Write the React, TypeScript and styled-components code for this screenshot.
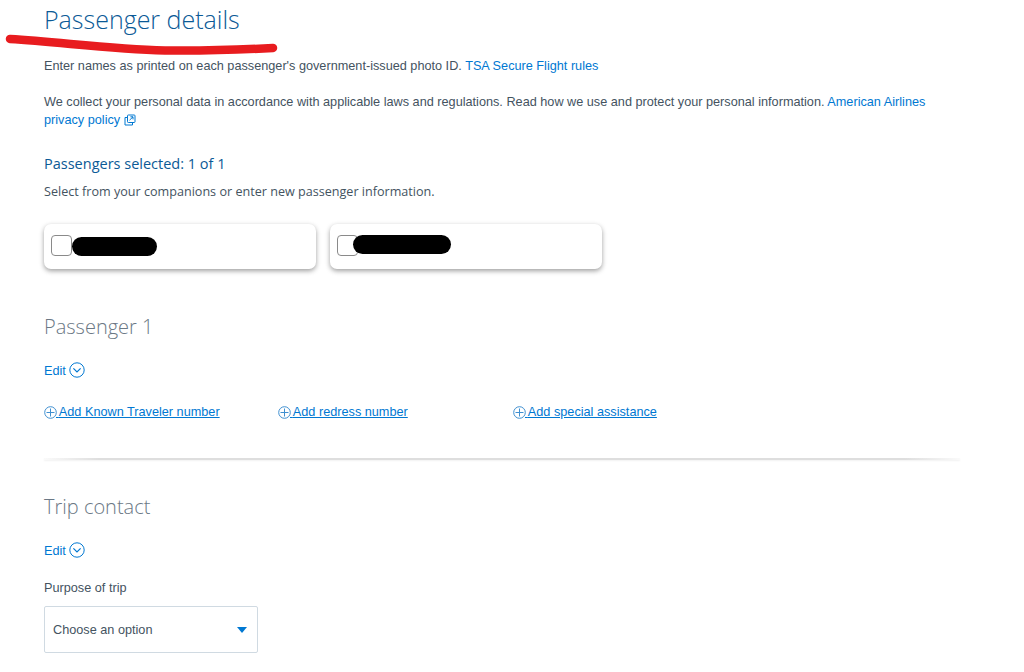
import * as React from 'react';
import styled, { createGlobalStyle } from 'styled-components';

const passengers = [
  { blotWidth: 85, blotHeight: 19, blotLeft: 28, blotTop: 13 },
  { blotWidth: 98, blotHeight: 19, blotLeft: 23, blotTop: 11 },
];

const extras = [
  { label: 'Add Known Traveler number', width: 234 },
  { label: 'Add redress number', width: 235 },
  { label: 'Add special assistance', width: 160 },
];

const CircleChevron = () => (
  <EditIcon viewBox="0 0 16 16" fill="none" stroke="#0078d2" strokeWidth="1">
    <circle cx="8" cy="8" r="7.2" />
    <path d="M4.4 6.4 8 10l3.6-3.6" strokeWidth="1.2" />
  </EditIcon>
);

const CirclePlus = () => (
  <PlusIcon viewBox="0 0 13 13" fill="none" stroke="#3f8fd0" strokeWidth="1">
    <circle cx="6.500" cy="6.500" r="5.800" />
    <path d="M6.500 2.500v8M2.500 6.500h8" />
  </PlusIcon>
);

const ExternalIcon = () => (
  <External viewBox="0 0 12 12" fill="none" stroke="#0078d2" strokeWidth="1">
    <rect x="3.500" y="1" width="7.500" height="7.500" rx="0.800" />
    <path d="M3 3.500H1v7.500h7.500V9" />
    <path d="M5.500 6.200 9 2.800M6.400 2.800H9v2.600" />
  </External>
);

export default () => {
  return (
    <>
      <GlobalStyle />
      <Page>
        <TitleBlock>
          <Title>Passenger details</Title>
          <Scribble viewBox="0 0 280 26" fill="none">
            <path
              d="M10 10C60 13 110 20 165 21.500C205 22 245 20.500 273 19"
              stroke="#e81c1f"
              strokeWidth="8.500"
              strokeLinecap="round"
            />
          </Scribble>
        </TitleBlock>

        <Intro>
          Enter names as printed on each passenger's government-issued photo ID.{' '}
          <Link>TSA Secure Flight rules</Link>
        </Intro>
        <Privacy>
          We collect your personal data in accordance with applicable laws and regulations. Read how
          we use and protect your personal information. <Link>American Airlines privacy policy</Link>{' '}
          <ExternalIcon />
        </Privacy>

        <SelectedTitle>Passengers selected: 1 of 1</SelectedTitle>
        <SelectedHint>Select from your companions or enter new passenger information.</SelectedHint>

        <CardRow>
          {passengers.map((p, i) => (
            <Card key={i}>
              <Check />
              <Blot
                style={{ width: p.blotWidth, height: p.blotHeight, left: p.blotLeft, top: p.blotTop }}
              />
            </Card>
          ))}
        </CardRow>

        <SectionTitle $top={44}>Passenger 1</SectionTitle>
        <EditRow>
          <EditLabel>Edit</EditLabel>
          <CircleChevron />
        </EditRow>

        <ExtrasRow>
          {extras.map((e) => (
            <Extra key={e.label} style={{ width: e.width }}>
              <CirclePlus />
              <ExtraLabel> {e.label}</ExtraLabel>
            </Extra>
          ))}
        </ExtrasRow>

        <Divider />

        <SectionTitle $top={33}>Trip contact</SectionTitle>
        <EditRow>
          <EditLabel>Edit</EditLabel>
          <CircleChevron />
        </EditRow>

        <FieldLabel>Purpose of trip</FieldLabel>
        <Select>
          <span>Choose an option</span>
          <Caret />
        </Select>
      </Page>
    </>
  );
};

const GlobalStyle = createGlobalStyle`
  html, body {
    margin: 0;
    background: #fff;
  }
  body {
    font-family: "Liberation Sans", Arial, sans-serif;
    font-size: 12.700px;
    color: #44535f;
    overflow: hidden;
  }
`;
const Page = styled.div`
  width: 1024px;
  height: 672px;
  padding-left: 44px;
  box-sizing: border-box;
  overflow: hidden;
`;
const TitleBlock = styled.div`
  position: relative;
  height: 57px;
`;
const Title = styled.h1`
  margin: 0;
  padding-top: 2px;
  font-family: "Open Sans", sans-serif;
  font-size: 25px;
  line-height: 34px;
  font-weight: 300;
  color: #0b5a96;
`;
const Scribble = styled.svg`
  position: absolute;
  left: -44px;
  top: 29px;
  width: 280px;
  height: 26px;
`;
const Intro = styled.p`
  margin: 0;
  line-height: 18px;
`;
const Privacy = styled.p`
  margin: 18px 0 0;
  width: 900px;
  line-height: 18px;
`;
const Link = styled.a`
  color: #0078d2;
`;
const External = styled.svg`
  width: 12px;
  height: 12px;
  vertical-align: -2px;
`;
const SelectedTitle = styled.h2`
  margin: 25px 0 0;
  font-family: "Open Sans", sans-serif;
  font-size: 14.500px;
  line-height: 20px;
  font-weight: 400;
  color: #0b5a96;
`;
const SelectedHint = styled.p`
  margin: 9px 0 0;
  font-family: "Open Sans", sans-serif;
  font-size: 12.600px;
  line-height: 18px;
`;
const CardRow = styled.div`
  display: flex;
  gap: 14px;
  margin-top: 23px;
`;
const Card = styled.div`
  position: relative;
  width: 272px;
  height: 45px;
  background: #fff;
  border-radius: 7px;
  box-shadow: 0 2px 5px rgba(0, 0, 0, 0.38);
`;
const Check = styled.div`
  position: absolute;
  left: 7px;
  top: 11px;
  width: 21px;
  height: 21px;
  box-sizing: border-box;
  background: #fff;
  border: 1px solid #8a8a8a;
  border-radius: 4px;
`;
const Blot = styled.div`
  position: absolute;
  background: #000;
  border-radius: 10px;
`;
const SectionTitle = styled.h2<{ $top: number }>`
  margin: ${(p) => p.$top}px 0 0;
  font-family: "Open Sans", sans-serif;
  font-size: 20px;
  line-height: 28px;
  font-weight: 300;
  color: #6b7885;
`;
const EditRow = styled.div`
  display: flex;
  align-items: center;
  gap: 3px;
  margin-top: 20px;
  height: 18px;
`;
const EditLabel = styled.span`
  color: #0078d2;
  position: relative;
  top: 1px;
`;
const EditIcon = styled.svg`
  width: 16px;
  height: 16px;
`;
const ExtrasRow = styled.div`
  display: flex;
  margin-top: 24px;
`;
const Extra = styled.div`
  display: flex;
  align-items: center;
  height: 18px;
`;
const PlusIcon = styled.svg`
  width: 13px;
  height: 13px;
  flex: none;
  margin-right: -1px;
`;
const ExtraLabel = styled.span`
  color: #0078d2;
  text-decoration: underline;
  white-space: pre;
`;
const Divider = styled.div`
  width: 916px;
  height: 2px;
  margin-top: 37px;
  background: linear-gradient(90deg, #fafafa, #dedede 6%, #dedede 94%, #fafafa);
  box-shadow: 0 1px 2px rgba(0, 0, 0, 0.06);
`;
const FieldLabel = styled.div`
  margin-top: 20px;
  line-height: 18px;
`;
const Select = styled.div`
  display: flex;
  align-items: center;
  justify-content: space-between;
  box-sizing: border-box;
  width: 214px;
  height: 47px;
  margin-top: 9px;
  padding: 0 10px 0 8px;
  border: 1px solid #d0dae2;
  border-radius: 2px;
`;
const Caret = styled.div`
  width: 0;
  height: 0;
  border-left: 5px solid transparent;
  border-right: 5px solid transparent;
  border-top: 6px solid #0078d2;
`;
